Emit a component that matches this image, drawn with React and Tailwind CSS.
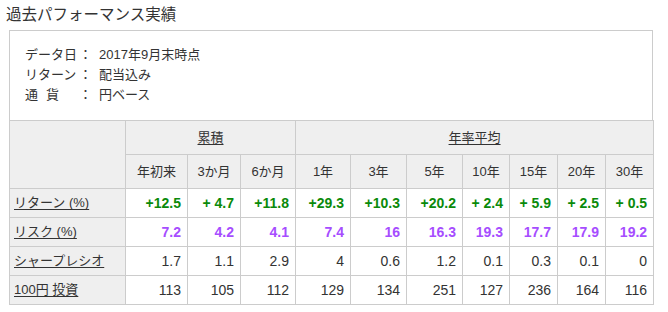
import React from 'react';

const font = { fontFamily: '"Liberation Sans", "Noto Sans CJK JP", sans-serif' };

const cols = [62, 53, 55, 55, 56, 56, 47, 48, 48, 48];
const periods = ['年初来', '3か月', '6か月', '1年', '3年', '5年', '10年', '15年', '20年', '30年'];

const rows = [
    { label: 'リターン (%)', color: 'text-[#0a8a0a] font-bold', values: ['+12.5', '+ 4.7', '+11.8', '+29.3', '+10.3', '+20.2', '+ 2.4', '+ 5.9', '+ 2.5', '+ 0.5'] },
    { label: 'リスク (%)', color: 'text-[#a64dff] font-bold', values: ['7.2', '4.2', '4.1', '7.4', '16', '16.3', '19.3', '17.7', '17.9', '19.2'] },
    { label: 'シャープレシオ', color: 'text-[#333]', values: ['1.7', '1.1', '2.9', '4', '0.6', '1.2', '0.1', '0.3', '0.1', '0'] },
    { label: '100円 投資', color: 'text-[#333]', values: ['113', '105', '112', '129', '134', '251', '127', '236', '164', '116'] },
];

const info = [
    { k: 'データ日', v: '2017年9月末時点', cls: '' },
    { k: 'リターン', v: '配当込み', cls: '' },
    { k: '通貨', v: '円ベース', cls: 'tracking-[8px]' },
];

const App = () => {
    return (
        <div className="w-[668px] h-[312px] bg-white text-[#333] text-[13px]" style={font}>
            {/* Title */}
            <h1 className="pl-[6px] pt-[5px] h-[30px] text-[15.5px] leading-[20px] text-[#333]">過去パフォーマンス実績</h1>

            {/* Info box */}
            <div className="ml-[9px] w-[644px] h-[90px] border border-b-0 border-[#cccccc] pt-[14px] pl-[15px]">
                {info.map((row) => (
                    <div key={row.k} className="flex leading-[20px]">
                        <span className={`w-[54px] ${row.cls}`}>{row.k}</span>
                        <span className="w-[13px] mr-[7px] text-center">：</span>
                        <span>{row.v}</span>
                    </div>
                ))}
            </div>

            {/* Performance table */}
            <table className="ml-[9px] w-[644px] border-collapse table-fixed">
                <colgroup>
                    <col className="w-[116px]" />
                    {cols.map((w, i) => (
                        <col key={i} style={{ width: w }} />
                    ))}
                </colgroup>
                <thead>
                    <tr className="h-[34px]">
                        <th rowSpan={2} className="border border-[#cccccc] bg-[#efefef]"></th>
                        <th colSpan={3} className="border border-[#cccccc] bg-[#efefef] font-normal">
                            <span className="underline underline-offset-2">累積</span>
                        </th>
                        <th colSpan={7} className="border border-[#cccccc] bg-[#efefef] font-normal">
                            <span className="underline underline-offset-2">年率平均</span>
                        </th>
                    </tr>
                    <tr className="h-[34px]">
                        {periods.map((p) => (
                            <th key={p} className="border border-[#cccccc] bg-[#efefef] font-normal">{p}</th>
                        ))}
                    </tr>
                </thead>
                <tbody>
                    {rows.map((r) => (
                        <tr key={r.label} className="h-[29px]">
                            <td className="border border-[#cccccc] bg-[#efefef] pl-[4px]">
                                <span className="underline underline-offset-2">{r.label}</span>
                            </td>
                            {r.values.map((v, i) => (
                                <td key={i} className={`border border-[#cccccc] text-right pr-[6px] text-[14px] whitespace-pre ${r.color}`}>{v}</td>
                            ))}
                        </tr>
                    ))}
                </tbody>
            </table>
        </div>
    );
};

export default App;
